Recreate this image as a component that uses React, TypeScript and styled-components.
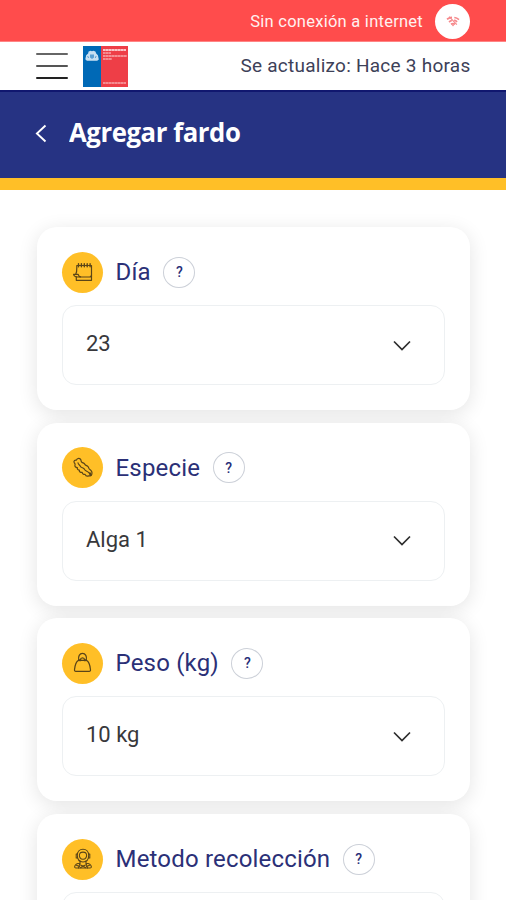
import React from "react";
import styled, { createGlobalStyle } from "styled-components";

const GlobalStyle = createGlobalStyle`
  * { box-sizing: border-box; }
  html, body { margin: 0; height: 100%; overflow: hidden; background: #fff; }
  body { font-family: Roboto, "Liberation Sans", sans-serif; }
  button { font: inherit; padding: 0; margin: 0; background: none; border: 0; }
`;

const Screen = styled.div`
  width: 506px;
  height: 900px;
  overflow: hidden;
  background: #fff;
`;

const OfflineBar = styled.div`
  height: 42px;
  padding: 1px 36px 0 0;
  display: flex;
  align-items: center;
  justify-content: flex-end;
  gap: 12px;
  background: #ff4c4c;
  border-bottom: 1px solid #ff8585;
  color: #fff1f0;
  font-size: 16.5px;
  letter-spacing: 0.25px;
`;

const SignalBadge = styled.span`
  width: 35px;
  height: 35px;
  border-radius: 50%;
  background: #fff;
  display: grid;
  place-items: center;
`;

const TopBar = styled.header`
  height: 48px;
  padding: 0 35.5px 0 36px;
  display: flex;
  align-items: center;
`;

const MenuButton = styled.button`
  width: 32px;
  height: 26px;
  margin-right: 15px;
  display: flex;
  flex-direction: column;
  justify-content: space-between;
`;

const MenuLine = styled.span<{ $tone: string }>`
  width: 32px;
  height: 2px;
  border-radius: 1px;
  background: ${(p) => p.$tone};
`;

const Updated = styled.span`
  margin: 0 0 1px auto;
  color: #3d4158;
  font-size: 19px;
  letter-spacing: 0.25px;
`;

const TitleBar = styled.div`
  height: 100px;
  padding: 0 35px 5px;
  display: flex;
  align-items: center;
  background: #263383;
  border-top: 2px solid #10176f;
  border-bottom: 12px solid #ffbf27;
`;

const BackButton = styled.button`
  width: 12px;
  height: 20px;
  margin-right: 22px;
  display: flex;
`;

const Title = styled.h1`
  margin: 0 0 3px;
  color: #fff;
  font-family: "Open Sans", "Noto Sans", sans-serif;
  font-weight: 700;
  font-size: 27.5px;
  letter-spacing: -0.45px;
  transform: scaleX(0.935);
  transform-origin: left center;
`;

const Cards = styled.main`
  padding: 37px 36px 0 37px;
  display: flex;
  flex-direction: column;
  gap: 12.7px;
`;

const Card = styled.section`
  height: 183px;
  flex: none;
  padding: 24px 25px;
  border-radius: 20px;
  background: #fff;
  box-shadow: 0 4px 20px rgba(0, 0, 0, 0.11);
`;

const CardHead = styled.div`
  height: 42px;
  display: flex;
  align-items: center;
`;

const IconDisc = styled.span`
  width: 41px;
  height: 41px;
  margin-right: 13px;
  border-radius: 50%;
  background: #ffbf27;
  display: grid;
  place-items: center;
`;

const Label = styled.span`
  margin-left: -0.5px;
  color: #2b3077;
  font-size: 24px;
  letter-spacing: 0.18px;
`;

const Help = styled.button`
  width: 32px;
  height: 31px;
  margin-left: 12.5px;
  border: 1px solid #ccd0d8;
  border-radius: 50%;
  color: #262d78;
  font-size: 14px;
  font-weight: 500;
`;

const Select = styled.button`
  width: 383px;
  height: 80px;
  margin-top: 12px;
  padding: 0 33px 3px 23px;
  border: 1.5px solid #edf0f2;
  border-radius: 14px;
  display: flex;
  align-items: center;
  justify-content: space-between;
  color: #38383b;
  font-size: 22px;
`;

const Chevron = styled.svg`
  width: 18px;
  height: 12px;
  margin-top: 4px;
`;

const iconStroke = {
  fill: "none",
  stroke: "#5b4518",
  strokeWidth: 1.2,
  strokeLinecap: "round" as const,
  strokeLinejoin: "round" as const,
};

const CalendarIcon = () => (
  <svg width="22" height="22" viewBox="0 0 22 22" {...iconStroke}>
    <path d="M4.8 4.5h14.7v9.3c0 1.5-.8 2.2-2 2.2H6c-2.2 0-3.9-.8-4.4-2.7h2.2c1.3-2.5 1-5.2 1-8.8Z" />
    <path d="M4.3 15.8v3.5h15.2v-5.2" />
    <path d="M3.8 13.3h2.4c.3 1.4 1 2.3 2.3 2.6" />
    <path d="M6.5 2.8v3M9.4 2.8v3M12.3 2.8v3M15.2 2.8v3M18.1 2.8v3" strokeWidth="1.4" />
  </svg>
);

const AlgaeIcon = () => (
  <svg width="22" height="22" viewBox="0 0 22 22" {...iconStroke}>
    <path d="M2.2 5.6C1.4 4 2.8 2.9 4.4 3.2 4.9 1.4 7 .8 8.3 2c1.1 1 .4 2.4 1.5 3.2 1.2.9 2.5.6 3 2 .4 1.3 1.7 1.3 2.8 2 1.4.9.8 2.2 2 3.1 1.8 1.1 2.8 2.8 2.2 5.1-.3 1.4-1.7 1.7-3 1.5-1.6.5-3.2 0-3.7-1.5-1.6.1-2.9-.5-2.9-2.1-1.8.3-3.1-.6-2.9-2.3-1.4.2-2.4-.9-1.8-2.2C3.6 10.4 2.4 9.3 3 8c.5-1-.1-1.4-.8-2.4Z" />
    <path d="M6 5.8c.2 1.9 1.8 2.2 2.3 3.4.6 1.4 2 1.4 3.1 2 1.3.7 1.2 1.9 2.5 2.5 1.6.7 2.9 1.5 4 3.2" />
    <path d="m18 16.2.6 2" strokeWidth="2" />
  </svg>
);

const WeightIcon = () => (
  <svg width="22" height="22" viewBox="0 0 22 22" {...iconStroke}>
    <path d="M6.7 8.1C6 4.5 7.5 1.4 10.5 1.4s4.6 3.1 3.8 6.7" />
    <path d="M8.3 7.8c.2-1.3 1-2 2.2-2s2 .7 2.2 2" />
    <path d="M6.5 8.4h8c2.5 1.2 3.6 5.4 4 9.3.1 1-.4 1.6-1.3 1.6H3.8c-.9 0-1.4-.6-1.3-1.6.4-3.9 1.5-8.1 4-9.3Z" />
    <path d="M7.7 8.2h.8M12.5 8.2h.8" strokeWidth="2" />
  </svg>
);

const DiverIcon = () => (
  <svg width="22" height="22" viewBox="0 0 22 22" {...iconStroke} strokeWidth="1.05">
    <path d="M5.3 7.3C5.3 3.6 7.7 1.2 11 1.2s5.7 2.4 5.7 6.1c0 4-2.2 6.7-5.7 6.7S5.3 11.3 5.3 7.3Z" />
    <path d="M7.4 7c.2-2 1.5-2.9 3.6-2.9s3.4.9 3.6 2.9-.9 4.3-3.6 4.3S7.2 9 7.4 7Z" />
    <path d="M5.3 6H4.2v4h1.4M16.7 6h1.1v4h-1.4M8 12.8v2.4c-2.5.2-4.8.8-5.3 3.1-.2 1 .3 1.6 1.2 1.6h14.2c.9 0 1.4-.6 1.2-1.6-.5-2.3-2.8-2.9-5.3-3.1v-2.4" />
    <path d="M8 15.2 6.5 20M14 15.2l1.5 4.8M8.5 17l2.5 1 2.5-1M4.5 17.3l3 1.2M17.5 17.3l-3 1.2M8.5 19.8 11 18l2.5 1.8" />
  </svg>
);

const NoSignalIcon = () => (
  <svg width="14" height="13" viewBox="0 0 14 13" fill="none" stroke="#f6888b" strokeWidth="1.7">
    <path d="M1 4.3C2.8 3 4.4 2.4 6 2.3M8.3 2.5c1.7.2 3.1.8 4.7 2.1M3 7c1.1-.9 1.8-1.3 2.9-1.5M8.2 5.2c1.1.2 2 .7 2.9 1.6M5 9.3c1.2-.9 2.8-.9 4 0" />
    <path d="m3.2 1.6 7.6 8" strokeWidth="1.2" />
    <path d="m5.4 9.6 1.6 2 1.6-2Z" fill="#f6888b" stroke="none" />
  </svg>
);

const LogoBox = styled.div`
  width: 45px;
  height: 41px;
  display: grid;
  grid-template-columns: 18px 27px;
  background: #ee3e47;
`;

const LogoBlue = styled.div`
  background: #0069b6;
  padding: 1px 2px;
`;

const LogoRed = styled.div`
  display: flex;
  flex-direction: column;
  padding: 3px 1px 2px 2px;
`;

const LogoLine = styled.span<{ $width: number; $gap: number; $alpha: number }>`
  width: ${(p) => p.$width}px;
  height: 2px;
  margin-top: ${(p) => p.$gap}px;
  background: repeating-linear-gradient(
    90deg,
    rgba(255, 255, 255, ${(p) => p.$alpha}) 0 2px,
    rgba(255, 255, 255, ${(p) => p.$alpha * 0.7}) 2px 3px
  );
`;

const Logo = () => (
  <LogoBox>
    <LogoBlue>
      <svg width="14" height="12" viewBox="0 0 14 12" fill="#e3effa">
        <path d="M3.6 1.6 5.6.7 7 1.2 8.4.7l2 .9.8 2 1.7 1.7.9 4.2-1.6 1.3H1.9L.3 9.3 1.2 5.3l1.9-1.7Z" opacity=".88" />
        <path d="M5 4.6h4v2.9L7 9.1 5 7.5Z" fill="#5b9fd3" />
        <path d="m2.6 6 1 2M11.2 6l-1 2" stroke="#5b9fd3" fill="none" />
      </svg>
    </LogoBlue>
    <LogoRed>
      <LogoLine $width={23} $gap={0} $alpha={0.7} />
      <LogoLine $width={8} $gap={1} $alpha={0.4} />
      <LogoLine $width={24} $gap={1} $alpha={0.42} />
      <LogoLine $width={9} $gap={1} $alpha={0.4} />
      <LogoLine $width={23} $gap={22} $alpha={0.4} />
    </LogoRed>
  </LogoBox>
);

const fields = [
  { label: "Día", value: "23", Icon: CalendarIcon },
  { label: "Especie", value: "Alga 1", Icon: AlgaeIcon },
  { label: "Peso (kg)", value: "10 kg", Icon: WeightIcon },
  { label: "Metodo recolección", value: "", Icon: DiverIcon },
];

export default function App() {
  return (
    <Screen>
      <GlobalStyle />
      <OfflineBar>
        <span>Sin conexión a internet</span>
        <SignalBadge><NoSignalIcon /></SignalBadge>
      </OfflineBar>
      <TopBar>
        <MenuButton aria-label="Menú">
          <MenuLine $tone="#666" />
          <MenuLine $tone="#555" />
          <MenuLine $tone="#222" />
        </MenuButton>
        <Logo />
        <Updated>Se actualizo: Hace 3 horas</Updated>
      </TopBar>
      <TitleBar>
        <BackButton aria-label="Volver">
          <svg width="12" height="20" viewBox="0 0 12 20" fill="none" stroke="#fff" strokeWidth="1.9">
            <path d="m10.5 2.5-8.6 8 8.6 8" />
          </svg>
        </BackButton>
        <Title>Agregar fardo</Title>
      </TitleBar>
      <Cards>
        {fields.map(({ label, value, Icon }) => (
          <Card key={label}>
            <CardHead>
              <IconDisc><Icon /></IconDisc>
              <Label>{label}</Label>
              <Help>?</Help>
            </CardHead>
            <Select>
              <span>{value}</span>
              <Chevron viewBox="0 0 18 12" fill="none" stroke="#2d2d2d" strokeWidth="1.7">
                <path d="m1 1.5 8 8 8-8" />
              </Chevron>
            </Select>
          </Card>
        ))}
      </Cards>
    </Screen>
  );
}
